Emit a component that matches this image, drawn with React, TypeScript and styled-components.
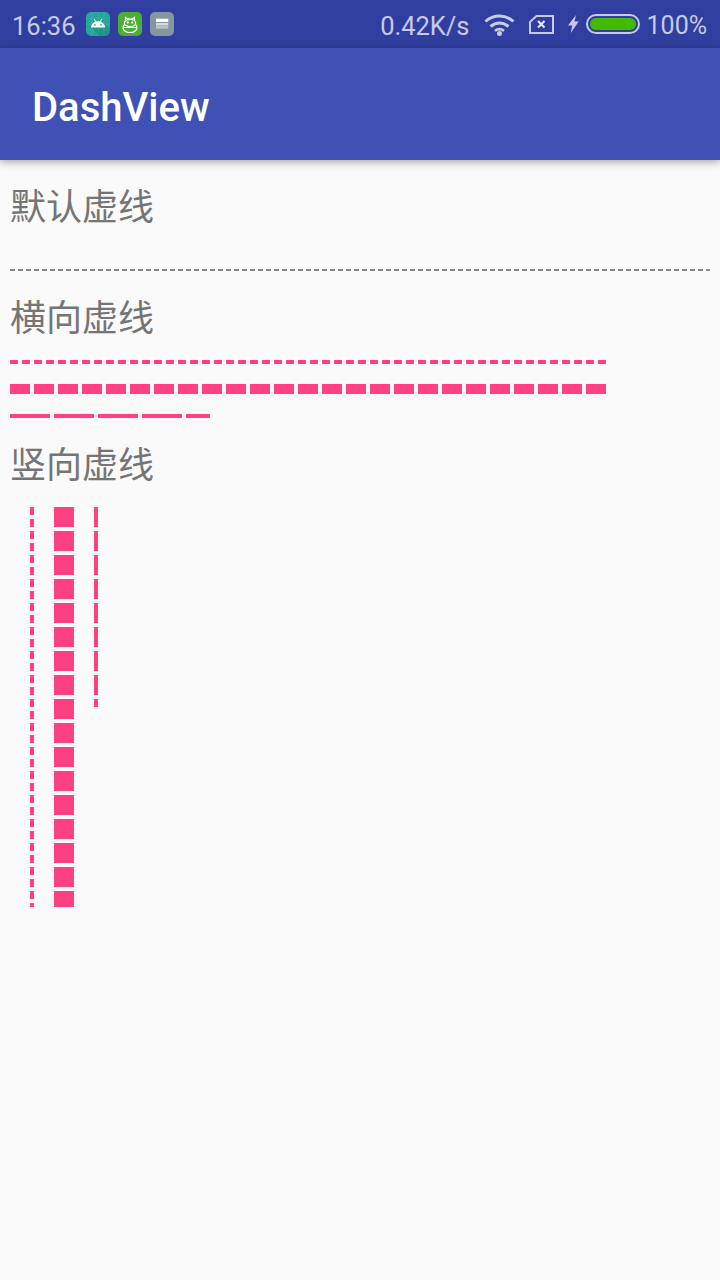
import styled, { createGlobalStyle } from "styled-components";

const PINK = "#ff4081";
const STATUS_TINT = "#c5cae9";

const GlobalStyle = createGlobalStyle`
  html, body {
    margin: 0;
    padding: 0;
    background: #fafafa;
  }
  body {
    font-family: Roboto, "Noto Sans CJK SC", sans-serif;
  }
`;

const AndroidIcon = () => (
  <AppIcon $bg="#26a69a">
    <svg width="24" height="24" viewBox="0 0 24 24">
      <path
        d="M6 0v24M12 0v24M18 0v24M0 6h24M0 12h24M0 18h24"
        stroke="#fff"
        strokeOpacity="0.08"
        strokeWidth="1"
      />
      <path d="M5 15.500l8.500 8.500H24V15.500z" fill="#00695c" fillOpacity="0.25" />
      <path d="M5 15.500c.3-3.700 3.200-6.200 7-6.200s6.700 2.500 7 6.200z" fill="#fff" />
      <path d="M8 6.800l2 3.200M16 6.800l-2 3.200" stroke="#fff" strokeWidth="1" />
      <circle cx="9" cy="12.800" r="0.900" fill="#26a69a" />
      <circle cx="15" cy="12.800" r="0.900" fill="#26a69a" />
    </svg>
  </AppIcon>
);

const CatIcon = () => (
  <AppIcon $bg="#4caf35">
    <svg width="24" height="24" viewBox="0 0 24 24" fill="none" stroke="#fff" strokeWidth="1.200">
      <path d="M7.500 8.500V5.500l2.500 1.700h4l2.500-1.700v3" />
      <ellipse cx="12" cy="11" rx="5.700" ry="3.700" />
      <path d="M6.500 12.500c-1.200 1.200-1.800 2.400-1.400 3.700.9 2.700 3.400 4.300 6.900 4.300s6-1.600 6.900-4.300c.4-1.300-.2-2.500-1.400-3.700" />
      <path d="M5.500 15.500h13" />
      <circle cx="9.800" cy="10.600" r="0.500" fill="#fff" />
      <circle cx="14.200" cy="10.600" r="0.500" fill="#fff" />
    </svg>
  </AppIcon>
);

const LayersIcon = () => (
  <AppIcon $bg="#84969f">
    <svg width="24" height="24" viewBox="0 0 24 24">
      <rect x="6" y="6.700" width="12.300" height="3.300" fill="#fff" />
      <rect x="6" y="11" width="12.300" height="2.300" fill="#d5dcdf" />
      <rect x="6" y="13.300" width="12.300" height="3.400" fill="#b6c2c7" />
    </svg>
  </AppIcon>
);

const WifiIcon = () => (
  <svg width="31" height="23" viewBox="0 0 31 23" fill="none" stroke={STATUS_TINT} strokeWidth="3">
    <path d="M1.500 8.500c8-7.300 20-7.300 28 0" />
    <path d="M6.500 13.500c5.500-4.700 12.500-4.700 18 0" />
    <path d="M11 17.800c3-2.300 6-2.300 9 0" strokeWidth="2.800" />
    <circle cx="15.500" cy="20.500" r="2.500" fill={STATUS_TINT} stroke="none" />
  </svg>
);

const NoSimIcon = () => (
  <svg width="25" height="19" viewBox="0 0 25 19" fill="none" stroke={STATUS_TINT} strokeWidth="2">
    <path d="M7.500 1H24v17H1V7z" />
    <path d="M9 6l6.500 6.500M15.500 6L9 12.500" stroke="#e8eaf6" />
  </svg>
);

const BoltIcon = () => (
  <svg width="11" height="18" viewBox="0 0 11 18">
    <path d="M8 0L0 10.500h4.300L2.700 18l8-11.500H6.500z" fill={STATUS_TINT} />
  </svg>
);

const BatteryIcon = () => (
  <BatteryShell>
    <BatteryFill />
  </BatteryShell>
);

const App = () => {
  return (
    <Page>
      <GlobalStyle />
      <StatusBar>
        <StatusGroup>
          <Clock>16:36</Clock>
          <AppIcons>
            <AndroidIcon />
            <CatIcon />
            <LayersIcon />
          </AppIcons>
        </StatusGroup>
        <StatusGroup>
          <StatusText>0.42K/s</StatusText>
          <SystemIcons>
            <WifiIcon />
            <NoSimIcon />
            <BoltIcon />
          </SystemIcons>
          <BatteryIcon />
          <BatteryText>100%</BatteryText>
        </StatusGroup>
      </StatusBar>
      <AppBar>
        <Title>DashView</Title>
      </AppBar>
      <Content>
        <Heading>默认虚线</Heading>
        <DefaultDash />
        <Heading>横向虚线</Heading>
        <DashStack>
          <HorizontalDash $width={596} $thick={4} $dash={8} />
          <HorizontalDash $width={596} $thick={10} $dash={20} />
          <HorizontalDash $width={200} $thick={4} $dash={40} />
        </DashStack>
        <Heading>竖向虚线</Heading>
        <VerticalRow>
          <VerticalDash $length={400} $thick={4} $dash={8} />
          <VerticalDash $length={400} $thick={20} $dash={20} />
          <VerticalDash $length={200} $thick={4} $dash={20} />
        </VerticalRow>
      </Content>
    </Page>
  );
};

export default App;

const Page = styled.div`
  width: 720px;
  height: 1280px;
  overflow: hidden;
  background: #fafafa;
`;

const StatusBar = styled.div`
  box-sizing: border-box;
  height: 48px;
  padding: 0 13px 0 12px;
  display: flex;
  align-items: center;
  justify-content: space-between;
  background: #303f9f;
  color: ${STATUS_TINT};
`;

const StatusGroup = styled.div`
  display: flex;
  align-items: center;
`;

const Clock = styled.span`
  font-size: 25.5px;
  line-height: 44px;
  padding-top: 4px;
  width: 74px;
`;

const AppIcons = styled.div`
  display: flex;
  gap: 8px;
`;

const AppIcon = styled.div<{ $bg: string }>`
  width: 24px;
  height: 24px;
  border-radius: 5px;
  overflow: hidden;
  background: ${(p) => p.$bg};
`;

const StatusText = styled.span`
  font-size: 25.5px;
  line-height: 44px;
  padding-top: 4px;
`;

const SystemIcons = styled.div`
  display: flex;
  align-items: center;
  margin-left: 14px;
  margin-right: 7px;
  gap: 14px;
`;

const BatteryShell = styled.div`
  box-sizing: border-box;
  width: 54px;
  height: 20px;
  padding: 2px;
  border: 2px solid ${STATUS_TINT};
  border-radius: 10px;
  display: flex;
`;

const BatteryFill = styled.div`
  flex: 1;
  border-radius: 6px;
  background: #44bb00;
`;

const BatteryText = styled(StatusText)`
  margin-left: 7px;
  font-size: 25px;
`;

const AppBar = styled.header`
  position: relative;
  box-sizing: border-box;
  height: 112px;
  padding: 6px 0 0 32px;
  display: flex;
  align-items: center;
  background: #3f51b5;
  box-shadow: 0 2px 8px rgba(0, 0, 0, 0.35);
`;

const Title = styled.h1`
  margin: 0;
  font-size: 40px;
  font-weight: 500;
  color: #fff;
`;

const Content = styled.main`
  padding: 0 10px;
  display: flow-root;
`;

const Heading = styled.h2`
  margin: 20px 0 21px;
  height: 48px;
  line-height: 48px;
  font-family: "Noto Sans CJK SC", sans-serif;
  font-size: 36px;
  font-weight: 400;
  color: #757575;
`;

const DefaultDash = styled.div`
  height: 2px;
  margin: 41px 0 0;
  background: repeating-linear-gradient(
    to right,
    #8a8a8a 0 5px,
    transparent 5px 8px
  );
`;

const DashStack = styled.div`
  display: flex;
  flex-direction: column;
  gap: 20px;
`;

const HorizontalDash = styled.div<{ $width: number; $thick: number; $dash: number }>`
  width: ${(p) => p.$width}px;
  height: ${(p) => p.$thick}px;
  background: repeating-linear-gradient(
    to right,
    ${PINK} 0 ${(p) => p.$dash}px,
    transparent ${(p) => p.$dash}px ${(p) => p.$dash + 4}px
  );
`;

const VerticalRow = styled.div`
  display: flex;
  align-items: flex-start;
  gap: 20px;
  padding-left: 20px;
`;

const VerticalDash = styled.div<{ $length: number; $thick: number; $dash: number }>`
  width: ${(p) => p.$thick}px;
  height: ${(p) => p.$length}px;
  background: repeating-linear-gradient(
    to bottom,
    ${PINK} 0 ${(p) => p.$dash}px,
    transparent ${(p) => p.$dash}px ${(p) => p.$dash + 4}px
  );
`;
